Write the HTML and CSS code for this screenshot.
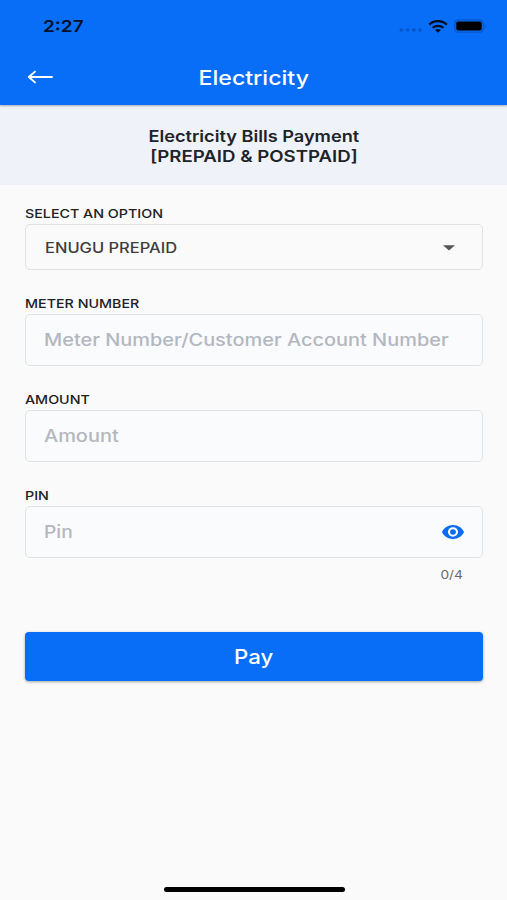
FILE: index.html
```html
<!DOCTYPE html>
<html lang="en">
<head>
<meta charset="utf-8">
<title>Electricity</title>
<link rel="stylesheet" href="styles.css">
</head>
<body>
<div class="screen">
  <header class="app-header">
    <div class="status-bar">
      <span class="wide time">2:27</span>
      <div class="status-icons">
        <svg class="signal" width="24" height="4" viewBox="0 0 24 4"><g fill="#0754ca"><circle cx="2.3" cy="2" r="1.8"/><circle cx="8.6" cy="2" r="1.8"/><circle cx="14.9" cy="2" r="1.8"/><circle cx="21" cy="2" r="1.8"/></g></svg>
        <svg class="wifi" width="20" height="13" viewBox="0 0 20 13"><g fill="none" stroke="#020d22"><path d="M1.2 4.7C6.2-.1 13.8-.1 18.8 4.7" stroke-width="2.5"/><path d="M4.6 7.8c3-2.7 7.8-2.7 10.8 0" stroke-width="2.2"/></g><path d="M7.1 10.1q2.9-2 5.8 0L10 12.7z" fill="#020d22"/></svg>
        <svg class="battery" width="33" height="14" viewBox="0 0 33 14"><rect x=".7" y=".9" width="28.6" height="12.2" rx="3.5" fill="none" stroke="#0754ca" stroke-width="1.3"/><rect x="2.3" y="2.5" width="25.4" height="9" rx="1.8" fill="#000"/><path d="M30.6 4.9q2.2 2.1 0 4.2z" fill="#0754ca"/></svg>
      </div>
    </div>
    <div class="title-bar">
      <svg class="back" width="26" height="14" viewBox="0 0 26 14"><path d="M25 7H2M8 1.6 1.8 7l6.2 5.4" fill="none" stroke="#fff" stroke-width="1.9" stroke-linecap="round" stroke-linejoin="round"/></svg>
      <h1 class="wide title">Electricity</h1>
    </div>
  </header>
  <section class="intro">
    <p class="wide intro-name">Electricity Bills Payment</p>
    <p class="wide intro-kind">[PREPAID &amp; POSTPAID]</p>
  </section>
  <main class="form">
    <div class="field">
      <div class="label"><span class="wide">SELECT AN OPTION</span></div>
      <div class="box select">
        <span class="wide value">ENUGU PREPAID</span>
        <svg class="caret" width="12" height="6" viewBox="0 0 12 6"><path d="M0 .3h12L6 5.5z" fill="#555657"/></svg>
      </div>
    </div>
    <div class="field">
      <div class="label"><span class="wide">METER NUMBER</span></div>
      <div class="box"><span class="wide hint">Meter Number/Customer Account Number</span></div>
    </div>
    <div class="field">
      <div class="label"><span class="wide">AMOUNT</span></div>
      <div class="box"><span class="wide hint">Amount</span></div>
    </div>
    <div class="field">
      <div class="label"><span class="wide">PIN</span></div>
      <div class="box">
        <span class="wide hint pin">Pin</span>
        <svg class="eye" width="22" height="14" viewBox="1 4.5 22 15" preserveAspectRatio="none"><path d="M12 4.5C7 4.5 2.73 7.61 1 12c1.73 4.39 6 7.5 11 7.5s9.27-3.11 11-7.5c-1.73-4.39-6-7.5-11-7.5zM12 17c-2.76 0-5-2.24-5-5s2.24-5 5-5 5 2.24 5 5-2.24 5-5 5zm0-8c-1.66 0-3 1.34-3 3s1.34 3 3 3 3-1.34 3-3-1.34-3-3-3z" fill="#0a6cf0"/></svg>
      </div>
      <div class="counter"><span class="wide">0/4</span></div>
    </div>
    <button class="pay"><span class="wide">Pay</span></button>
  </main>
  <div class="home-indicator"></div>
</div>
</body>
</html>
```
FILE: styles.css
```css
* { box-sizing: border-box; }

body {
  margin: 0;
  font-family: Inter, "Liberation Sans", sans-serif;
  font-weight: 500;
  background: #fafafa;
}

h1, p { margin: 0; }
svg { display: block; flex: none; }

.screen {
  width: 507px;
  height: 900px;
  display: flex;
  flex-direction: column;
  overflow: hidden;
}

/* Lettering is drawn wider than the font's natural proportions. */
.wide {
  display: inline-block;
  white-space: nowrap;
  transform: scaleX(1.19);
  transform-origin: left center;
}

.app-header {
  height: 105px;
  flex: none;
  background: #086ef7;
  box-shadow: 0 1px 2px rgba(0, 0, 0, .3);
  z-index: 1;
}

.status-bar {
  height: 52px;
  display: flex;
  align-items: center;
  justify-content: space-between;
  padding: 0 20px 0 43px;
}

.time {
  font-size: 16.5px;
  font-weight: 600;
  color: #020f28;
  transform: scaleX(1.15);
}

.status-icons {
  display: flex;
  align-items: center;
}

.signal { margin: 7px 5px 0 0; }
.wifi { margin-right: 6px; }

.title-bar {
  height: 52px;
  display: grid;
  grid-template-columns: 1fr auto 1fr;
  align-items: center;
  padding: 0 27px;
}

.back { margin-bottom: 2px; }

.title {
  font-size: 20px;
  font-weight: 500;
  color: #fff;
  transform: scaleX(1.155);
  transform-origin: center;
}

.intro {
  height: 80px;
  flex: none;
  display: flex;
  flex-direction: column;
  align-items: center;
  padding-top: 21px;
  background: #eff3f9;
  color: #202328;
  font-size: 16px;
  font-weight: 600;
  line-height: 20px;
}

.intro .wide { transform-origin: center; }
.intro-name { transform: scaleX(1.135); }
.intro-kind { transform: scaleX(1.165); }

.form {
  flex: 1;
  padding: 21px 24.5px 0 25px;
}

.field { margin-bottom: 26px; }
.field:last-of-type { margin-bottom: 0; }

.label {
  height: 18px;
  padding-left: .4px;
  font-size: 12px;
  line-height: 16px;
  color: #202124;
}

.box {
  height: 52px;
  display: flex;
  align-items: center;
  justify-content: space-between;
  padding: 0 17.5px 0 18px;
  border: 1px solid #dfe2e5;
  border-radius: 5px;
  background: #fafbfc;
}

.select {
  height: 46px;
  padding: 0 27px 0 18.5px;
  background: #fafafa;
}

.value {
  font-size: 14px;
  color: #3c3d3f;
  transform: scaleX(1.177);
}

.caret { margin-top: 1px; }

.hint {
  margin-bottom: 1px;
  font-size: 17px;
  color: #b3b7c0;
  transform: scaleX(1.173);
}

.pin { transform: scaleX(1.13); }

.counter {
  height: 16px;
  margin-top: 9px;
  padding-right: 19.5px;
  text-align: right;
  font-size: 11.5px;
  font-weight: 400;
  line-height: 16px;
  color: #66686b;
}

.counter .wide { transform-origin: right center; }

.pay {
  width: 100%;
  height: 48.5px;
  margin-top: 49px;
  padding: 1px 0 0;
  display: flex;
  align-items: center;
  justify-content: center;
  border: 0;
  border-radius: 4px;
  background: #086ef7;
  box-shadow: 0 1px 3px rgba(0, 0, 0, .35);
  color: #fff;
  font: 500 20px Inter, "Liberation Sans", sans-serif;
}

.pay .wide {
  transform: scaleX(1.11);
  transform-origin: center;
}

.home-indicator {
  width: 181px;
  height: 5px;
  flex: none;
  margin: 0 auto 8px 163.5px;
  border-radius: 3px;
  background: #000;
}
```
